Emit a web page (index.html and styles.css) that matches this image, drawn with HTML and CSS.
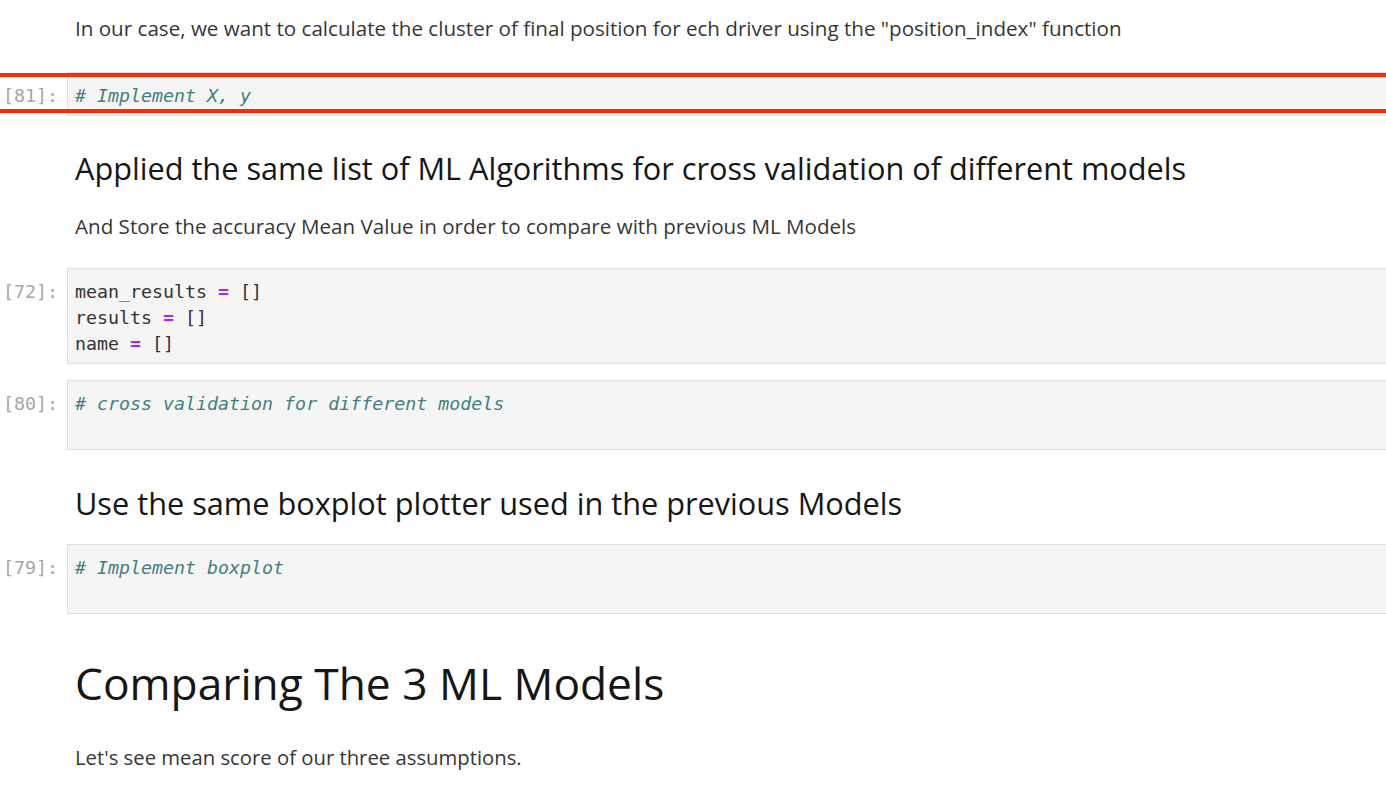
FILE: index.html
```html
<!DOCTYPE html>
<html>
<head>
<meta charset="utf-8">
<link rel="stylesheet" href="styles.css">
</head>
<body>
<div class="nb">
  <p class="md p-first">In our case, we want to calculate the cluster of final position for ech driver using the "position_index" function</p>

  <div class="cell selected gap-30">
    <div class="prompt">[81]:</div>
    <div class="code">
      <div class="ln"><span class="c"># Implement X, y</span></div>
    </div>
  </div>

  <h2 class="md h2 gap-34">Applied the same list of ML Algorithms for cross validation of different models</h2>
  <p class="md gap-26">And Store the accuracy Mean Value in order to compare with previous ML Models</p>

  <div class="cell gap-28">
    <div class="prompt">[72]:</div>
    <div class="code">
      <div class="ln">mean_results <span class="o">=</span> []</div>
      <div class="ln">results <span class="o">=</span> []</div>
      <div class="ln">name <span class="o">=</span> []</div>
    </div>
  </div>

  <div class="cell gap-16">
    <div class="prompt">[80]:</div>
    <div class="code">
      <div class="ln"><span class="c"># cross validation for different models</span></div>
      <div class="ln"></div>
    </div>
  </div>

  <h2 class="md h2 gap-35">Use the same boxplot plotter used in the previous Models</h2>

  <div class="cell gap-23">
    <div class="prompt">[79]:</div>
    <div class="code">
      <div class="ln"><span class="c"># Implement boxplot</span></div>
      <div class="ln"></div>
    </div>
  </div>

  <h1 class="md h1 gap-41">Comparing The 3 ML Models</h1>
  <p class="md p-last gap-32">Let's see mean score of our three assumptions.</p>
</div>
</body>
</html>
```

FILE: styles.css
```css
html, body {
  margin: 0;
  padding: 0;
  background: #ffffff;
}

.nb {
  width: 1386px;
  overflow: hidden;
  display: flex;
  flex-direction: column;
}

.md {
  margin: 0;
  padding-left: 75px;
  font-family: "Open Sans", "Noto Sans", sans-serif;
  color: #363636;
  font-size: 20.6px;
  line-height: 28px;
  font-weight: 400;
  white-space: nowrap;
}

.p-first { margin-top: 14px; }
.p-last { font-size: 20.3px; }

.h2 {
  font-size: 30.7px;
  line-height: 36px;
  color: #161616;
  font-weight: 500;
}

.h1 {
  font-size: 44.3px;
  line-height: 56px;
  color: #161616;
  font-weight: 500;
}

.gap-16 { margin-top: 16px; }
.gap-23 { margin-top: 23px; }
.gap-26 { margin-top: 26px; }
.gap-28 { margin-top: 28px; }
.gap-30 { margin-top: 30px; }
.gap-32 { margin-top: 32px; }
.gap-34 { margin-top: 34px; }
.gap-35 { margin-top: 35px; }
.gap-41 { margin-top: 41px; }

.cell {
  position: relative;
  display: flex;
  align-items: flex-start;
}

.prompt {
  width: 58px;
  padding: 11px 9px 0 0;
  text-align: right;
  font-family: "DejaVu Sans Mono", monospace;
  font-size: 18.3px;
  line-height: 26px;
  color: #a6a6a6;
  flex: none;
}

.code {
  flex: 1;
  background: #f5f5f5;
  border: 1px solid #e0e0e0;
  border-right: none;
  padding: 10px 7px 6px;
  font-family: "DejaVu Sans Mono", monospace;
  font-size: 18.3px;
  color: #333333;
}

.ln {
  height: 26px;
  line-height: 26px;
  white-space: pre;
}

.c {
  color: #408080;
  font-style: italic;
}

.o {
  color: #aa22ff;
  font-weight: bold;
}

.selected::before,
.selected::after {
  content: "";
  position: absolute;
  left: 0;
  right: 0;
  height: 4px;
  background: #ff2a05;
}

.selected::before { top: 1px; }
.selected::after { top: 37px; }
```
